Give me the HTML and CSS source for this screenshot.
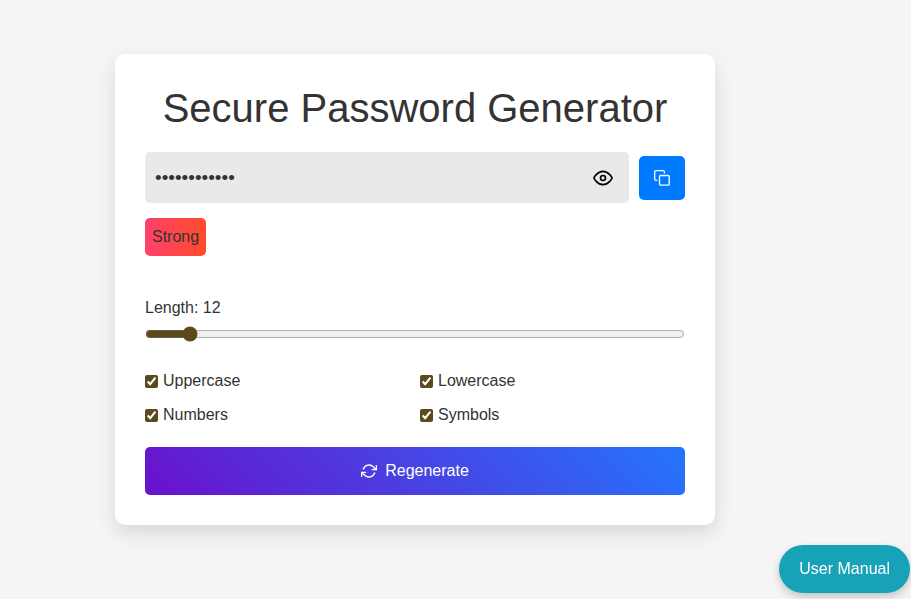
FILE: index.html
```html
<!DOCTYPE html>
<html lang="en">
<head>
<meta charset="utf-8">
<meta name="viewport" content="width=device-width, initial-scale=1">
<title>Secure Password Generator</title>
<link rel="stylesheet" href="styles.css">
</head>
<body>
<main class="page">
  <section class="card">
    <h1 class="title">Secure Password Generator</h1>
    <div class="password-row">
      <div class="password-box">
        <input class="password" type="password" value="aB3$xY7!kQ9#" aria-label="Generated password" readonly>
        <button class="toggle" type="button" aria-label="Show password">
          <svg width="20" height="20" viewBox="0 0 24 24" fill="none" stroke="currentColor" stroke-width="2" stroke-linecap="round" stroke-linejoin="round"><path d="M1 12s4-8 11-8 11 8 11 8-4 8-11 8-11-8-11-8z"/><circle cx="12" cy="12" r="3"/></svg>
        </button>
      </div>
      <button class="copy" type="button" aria-label="Copy password">
        <svg width="16" height="16" viewBox="0 0 16 16" fill="none" stroke="currentColor" stroke-width="1.3" stroke-linejoin="round" stroke-linecap="round"><rect x="5.500" y="5.500" width="9.700" height="9.700" rx="1.200"/><path d="M2.800 10.400H2A1.300 1.300 0 0 1 .7 9.100V2A1.300 1.300 0 0 1 2 .7H9.100A1.300 1.300 0 0 1 10.400 2V2.800"/></svg>
      </button>
    </div>
    <div class="strength">Strong</div>
    <div class="length">
      <label for="length">Length: 12</label>
      <input class="slider" id="length" type="range" min="8" max="64" value="12">
    </div>
    <div class="options">
      <label class="option"><input type="checkbox" checked>Uppercase</label>
      <label class="option"><input type="checkbox" checked>Lowercase</label>
      <label class="option"><input type="checkbox" checked>Numbers</label>
      <label class="option"><input type="checkbox" checked>Symbols</label>
    </div>
    <button class="regenerate" type="button">
      <svg width="16" height="16" viewBox="0 0 24 24" fill="none" stroke="currentColor" stroke-width="2" stroke-linecap="round" stroke-linejoin="round"><path d="M23 4v6h-6M1 20v-6h6"/><path d="M3.510 9a9 9 0 0 1 14.850-3.360L23 10M1 14l4.640 4.360A9 9 0 0 0 20.490 15"/></svg>
      Regenerate
    </button>
  </section>
</main>
<button class="manual" type="button">User Manual</button>
</body>
</html>
```
FILE: styles.css
```css
* {
  box-sizing: border-box;
}

body {
  margin: 0;
  background: #f5f5f5;
  color: #333;
  font-family: "Liberation Sans", Arial, sans-serif;
  font-size: 16px;
  line-height: 24px;
}

button,
input {
  font: inherit;
}

button {
  border: 0;
  cursor: pointer;
}

svg {
  display: block;
}

.page {
  display: flex;
  justify-content: center;
  padding: 54px 81px 54px 0;
}

.card {
  width: 100%;
  max-width: 600px;
  padding: 30px;
  background: #fff;
  border-radius: 10px;
  box-shadow: 0 8px 20px rgba(0, 0, 0, 0.12);
}

.title {
  margin: 0 0 20px;
  font-size: 40px;
  font-weight: 400;
  line-height: 48px;
  text-align: center;
}

.password-row {
  display: flex;
  align-items: center;
  gap: 10px;
  margin-bottom: 15px;
}

.password-box {
  display: flex;
  flex: 1;
  align-items: center;
  height: 51px;
  padding: 0 16px 0 10px;
  background: #e9e9e9;
  border-radius: 5px;
}

.password {
  flex: 1;
  min-width: 0;
  padding: 0;
  border: 0;
  outline: 0;
  background: none;
  color: inherit;
  font-size: 19px;
}

.toggle {
  padding: 0;
  background: none;
  color: #000;
}

.copy {
  padding: 14px 15px;
  background: #007bff;
  border-radius: 5px;
  color: #fff;
}

.strength {
  width: fit-content;
  padding: 7px;
  border-radius: 5px;
  background: linear-gradient(90deg, #ff416c, #ff4b2b);
}

.length {
  margin: 40px 0 27px;
}

.length label {
  display: block;
}

.slider {
  display: block;
  width: 100%;
  height: 16px;
  margin: 6px 0 0;
  accent-color: #5c4a1c;
}

.options {
  display: grid;
  grid-template-columns: 1fr 1fr;
  gap: 10px;
  margin-bottom: 20px;
}

.option {
  display: flex;
  align-items: center;
  gap: 5px;
}

.option input {
  width: 13px;
  height: 13px;
  margin: 0;
  accent-color: #5c4a1c;
}

.regenerate {
  display: flex;
  align-items: center;
  justify-content: center;
  gap: 8px;
  width: 100%;
  padding: 12px;
  border-radius: 5px;
  background: linear-gradient(45deg, #6a11cb, #2575fc);
  color: #fff;
}

.manual {
  position: fixed;
  right: 1px;
  bottom: 6px;
  padding: 12px 20px;
  border-radius: 24px;
  background: #17a2b8;
  color: #fff;
  box-shadow: 0 4px 8px rgba(0, 0, 0, 0.2);
}
```
